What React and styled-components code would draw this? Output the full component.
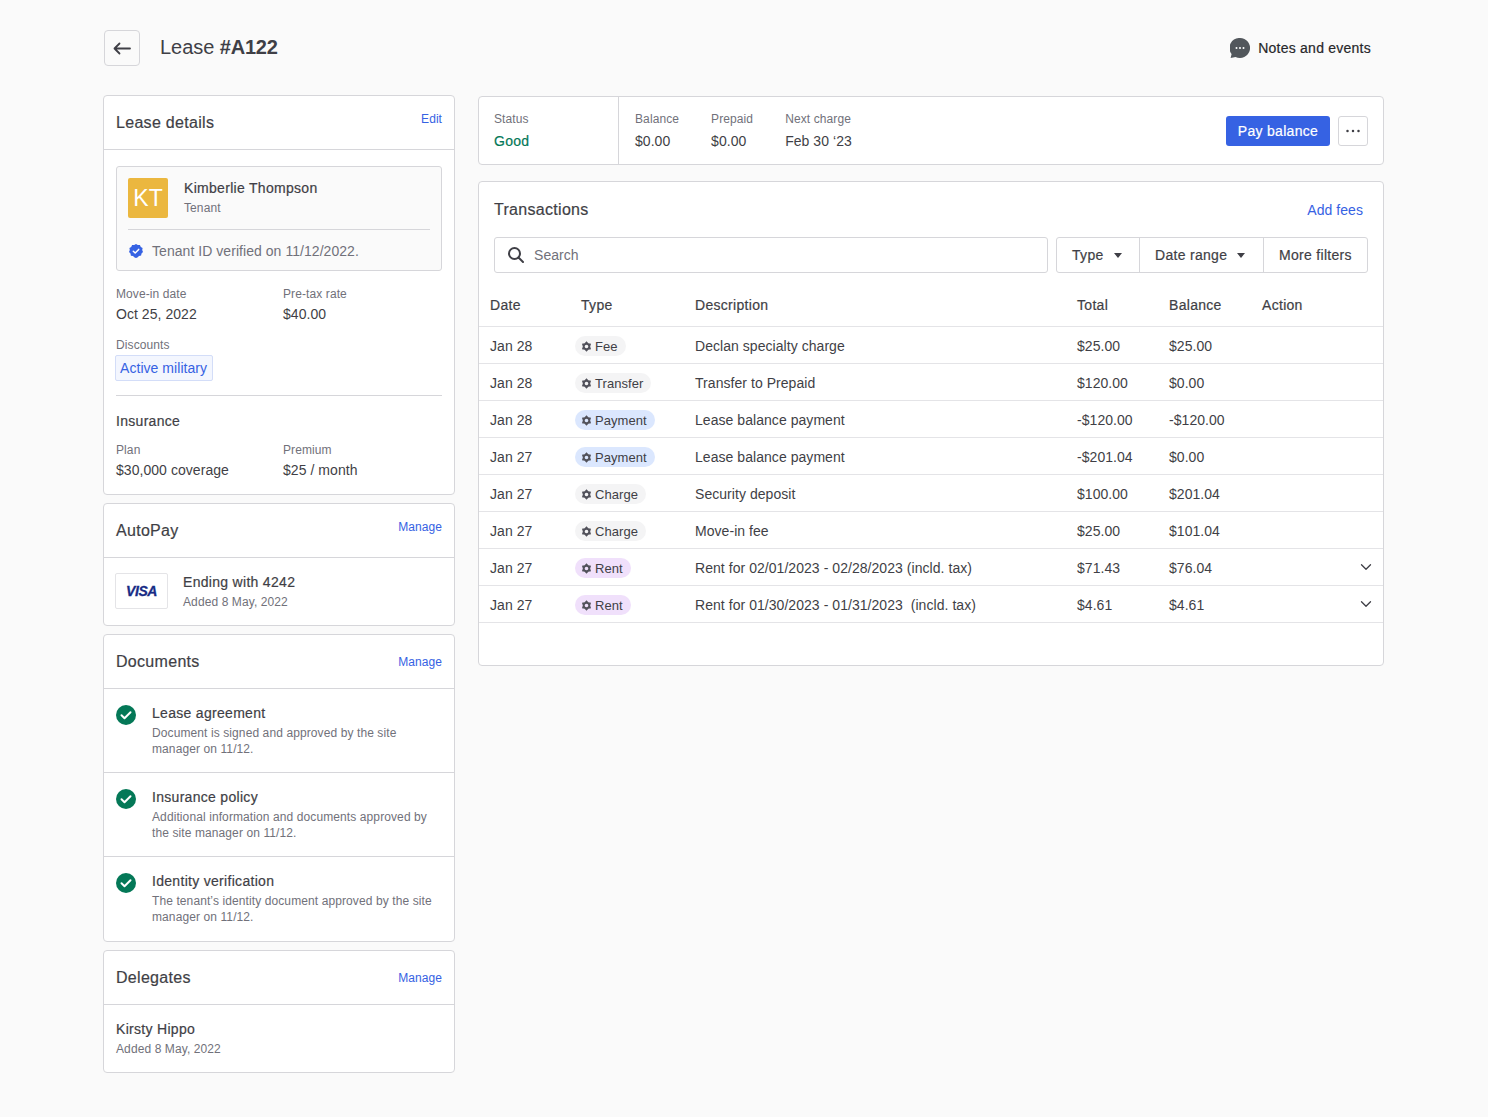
import React from 'react'
import styled, { createGlobalStyle, css } from 'styled-components'
import { ChevronDown } from 'lucide-react'

const colors = {
  bg: '#fafafa',
  border: '#d6d6da',
  line: '#e4e4e7',
  text: '#3f3f46',
  muted: '#71717a',
  blue: '#3662e3',
  green: '#047857',
}

const medium = css`
  font-weight: 400;
  letter-spacing: 0.3px;
  -webkit-text-stroke: 0.2px currentColor;
`

const GlobalStyle = createGlobalStyle`
  html, body { margin: 0; padding: 0; background: ${colors.bg}; }
  body {
    font-family: "Liberation Sans", Arial, sans-serif;
    color: ${colors.text};
    font-size: 14px;
    letter-spacing: 0.05px;
  }
  * { box-sizing: border-box; }
`

const Page = styled.div`
  width: 1488px;
  height: 1117px;
  padding: 30px 104px 0 103px;
`

const Header = styled.header`
  display: flex;
  align-items: center;
  height: 36px;
  margin-bottom: 29px;
  padding-left: 1px;
  padding-right: 13px;
`

const BackButton = styled.button`
  width: 36px;
  height: 36px;
  padding: 0;
  display: flex;
  align-items: center;
  justify-content: center;
  background: transparent;
  border: 1px solid ${colors.border};
  border-radius: 4px;
  color: ${colors.text};
`

const Title = styled.h1`
  margin: 0 0 2px 20px;
  font-size: 20px;
  line-height: 30px;
  font-weight: 400;
  letter-spacing: -0.05px;
  b { font-weight: 700; letter-spacing: -0.2px; }
`

const NotesLink = styled.div`
  margin-left: auto;
  display: flex;
  align-items: center;
  gap: 8px;
  font-size: 14px;
  ${medium}
  letter-spacing: 0.24px;
  color: #27272a;
`

const Columns = styled.div`
  display: flex;
  align-items: flex-start;
  gap: 23px;
`

const Sidebar = styled.aside`
  width: 352px;
  display: flex;
  flex-direction: column;
  gap: 8px;
`

const Main = styled.main`
  width: 906px;
  padding-top: 1px;
  display: flex;
  flex-direction: column;
  gap: 16px;
`

const Card = styled.section`
  background: #fff;
  border: 1px solid ${colors.border};
  border-radius: 4px;
`

const CardHeader = styled.div`
  height: 54px;
  padding: 0 12px;
  display: flex;
  align-items: center;
  justify-content: space-between;
  border-bottom: 1px solid ${colors.border};
`

const CardTitle = styled.h2`
  margin: 0;
  font-size: 16px;
  ${medium}
  color: ${colors.text};
`

const LinkText = styled.a`
  color: ${colors.blue};
  font-size: ${p => p.$size || 12}px;
  position: relative;
  top: ${p => p.$up ? -4 : 0}px;
`

const CardBody = styled.div`
  padding: ${p => p.$pad || '16px 12px'};
`

const TenantBox = styled.div`
  border: 1px solid ${colors.border};
  border-radius: 3px;
  background: #fafafa;
  padding: 11px 11px 0;
  height: 105px;
`

const TenantRow = styled.div`
  display: flex;
  align-items: center;
  gap: 16px;
  padding-bottom: 11px;
  border-bottom: 1px solid ${colors.border};
`

const TenantInfo = styled.div`
  padding-bottom: 2px;
`

const Avatar = styled.div`
  width: 40px;
  height: 40px;
  border-radius: 2px;
  background: #ebb73f;
  color: #fff;
  font-size: 23px;
  display: flex;
  align-items: center;
  justify-content: center;
`

const Name = styled.div`
  font-size: 14px;
  ${medium}
  line-height: 20px;
`

const Sub = styled.div`
  font-size: 12px;
  line-height: 16px;
  letter-spacing: 0.1px;
  color: ${colors.muted};
  margin-top: ${p => p.$top || 0}px;
`

const Verified = styled.div`
  display: flex;
  align-items: center;
  gap: 9px;
  height: 41px;
  padding-left: 1px;
  color: ${colors.muted};
  font-size: 14px;
`

const FieldGrid = styled.div`
  display: grid;
  grid-template-columns: 167px 1fr;
  margin-top: ${p => p.$top || 0}px;
`

const FieldLabel = styled.div`
  font-size: 12px;
  line-height: 16px;
  letter-spacing: 0.1px;
  color: ${colors.muted};
`

const FieldValue = styled.div`
  font-size: 14px;
  line-height: 20px;
  margin-top: 2px;
`

const DiscountTag = styled.span`
  display: inline-block;
  margin: 2px 0 0 -1px;
  height: 26px;
  line-height: 24px;
  padding: 0 5px 0 4px;
  color: ${colors.blue};
  background: #f3f6fe;
  border: 1px solid #d3ddf8;
  border-radius: 2px;
  font-size: 14px;
`

const Divider = styled.hr`
  border: 0;
  border-top: 1px solid ${colors.border};
  margin: 14px 0 15px;
`

const SectionTitle = styled.div`
  font-size: 14px;
  ${medium}
  line-height: 20px;
`

const PayRow = styled.div`
  display: flex;
  align-items: center;
  gap: 15px;
`

const VisaBox = styled.div`
  width: 53px;
  height: 36px;
  border: 1px solid ${colors.line};
  border-radius: 2px;
  display: flex;
  align-items: center;
  justify-content: center;
  color: #172b85;
  font-size: 14px;
  font-weight: 700;
  font-style: italic;
  letter-spacing: -0.4px;
  -webkit-text-stroke: 0.3px currentColor;
`

const DocRow = styled.div`
  display: flex;
  gap: 16px;
  height: ${p => p.$h || 84}px;
  padding: 14px 12px 0;
  border-bottom: ${p => p.$last ? 'none' : `1px solid ${colors.border}`};
`

const DocIcon = styled.svg`
  flex: none;
  margin-top: 2px;
`

const DocTitle = styled.div`
  font-size: 14px;
  ${medium}
  line-height: 20px;
`

const DocText = styled.div`
  font-size: 12px;
  line-height: 16px;
  letter-spacing: 0.1px;
  color: ${colors.muted};
  margin-top: 2px;
  max-width: 285px;
`

const SummaryCard = styled(Card)`
  height: 69px;
  display: flex;
  align-items: stretch;
`

const SummaryStatus = styled.div`
  width: 140px;
  padding: 14px 15px;
  border-right: 1px solid ${colors.border};
`

const SummaryItems = styled.div`
  display: flex;
  padding: 14px 16px;
  gap: 32px;
`

const SummaryValue = styled.div`
  font-size: 14px;
  line-height: 20px;
  margin-top: 4px;
  ${p => p.$good && medium}
  color: ${p => p.$good ? colors.green : colors.text};
`

const SummaryActions = styled.div`
  margin-left: auto;
  display: flex;
  align-items: center;
  gap: 8px;
  padding-right: 15px;
`

const PayButton = styled.button`
  height: 30px;
  width: 104px;
  padding: 0;
  background: ${colors.blue};
  color: #fff;
  border: 0;
  border-radius: 3px;
  font-family: inherit;
  font-size: 14px;
  ${medium}
`

const MoreButton = styled.button`
  width: 30px;
  height: 30px;
  padding: 0;
  display: flex;
  align-items: center;
  justify-content: center;
  background: #fff;
  border: 1px solid ${colors.border};
  border-radius: 3px;
`

const TxCard = styled(Card)`
  height: 485px;
`

const TxHeader = styled.div`
  display: flex;
  align-items: center;
  justify-content: space-between;
  padding: 0 20px 0 15px;
  height: 55px;
`

const Toolbar = styled.div`
  display: flex;
  gap: 8px;
  padding: 0 15px;
  margin-bottom: 12px;
`

const SearchBox = styled.div`
  flex: 1;
  height: 36px;
  display: flex;
  align-items: center;
  gap: 10px;
  padding: 0 13px;
  border: 1px solid ${colors.border};
  border-radius: 3px;
  color: ${colors.muted};
`

const FilterGroup = styled.div`
  display: flex;
  height: 36px;
  border: 1px solid ${colors.border};
  border-radius: 3px;
`

const FilterItem = styled.div`
  display: flex;
  align-items: center;
  gap: 10px;
  width: ${p => p.$w}px;
  padding-left: 15px;
  ${medium}
  border-left: ${p => p.$first ? 'none' : `1px solid ${colors.border}`};
`

const Caret = styled.span`
  width: 0;
  height: 0;
  border-left: 4.5px solid transparent;
  border-right: 4.5px solid transparent;
  border-top: 5px solid ${colors.text};
`

const TableRow = styled.div`
  display: grid;
  grid-template-columns: 91px 114px 382px 92px 93px 1fr 18px;
  align-items: center;
  height: ${p => p.$head ? 42 : 37}px;
  padding: ${p => p.$head ? '0 8px 2px 11px' : '1px 8px 0 11px'};
  border-bottom: 1px solid ${colors.line};
  ${p => p.$head && medium}
`

const pillBg = { gray: '#f4f4f5', blue: '#dbe7fe', purple: '#f0e0fb' }

const Pill = styled.span`
  justify-self: start;
  margin-left: -6px;
  height: 20px;
  padding: 1px 8px 0 6px;
  display: inline-flex;
  align-items: center;
  gap: 3px;
  border-radius: 10px;
  font-size: 13px;
  line-height: 19px;
  background: ${p => pillBg[p.$tone]};
`

const Chevron = styled(ChevronDown)`
  margin-top: -2px;
`

const Gear = () => (
  <svg width="11" height="11" viewBox="0 0 24 24" fill="#52525b">
    <path fillRule="evenodd" d="M12 .5L16 5.070 21.960 6.250 20 12l1.960 5.750L16 18.930 12 23.500l-4-4.570-5.960-1.180L4 12 2.040 6.250 8 5.070zM12 8a4 4 0 1 0 0 8 4 4 0 0 0 0-8z" />
  </svg>
)

const CheckCircle = () => (
  <DocIcon width="20" height="20" viewBox="0 0 20 20">
    <circle cx="10" cy="10" r="10" fill={colors.green} />
    <path d="M5.500 10.300l3 2.900 6-6" fill="none" stroke="#fff" strokeWidth="2" strokeLinecap="round" strokeLinejoin="round" />
  </DocIcon>
)

const transactions = [
  ['Jan 28', 'Fee', 'gray', 'Declan specialty charge', '$25.00', '$25.00'],
  ['Jan 28', 'Transfer', 'gray', 'Transfer to Prepaid', '$120.00', '$0.00'],
  ['Jan 28', 'Payment', 'blue', 'Lease balance payment', '-$120.00', '-$120.00'],
  ['Jan 27', 'Payment', 'blue', 'Lease balance payment', '-$201.04', '$0.00'],
  ['Jan 27', 'Charge', 'gray', 'Security deposit', '$100.00', '$201.04'],
  ['Jan 27', 'Charge', 'gray', 'Move-in fee', '$25.00', '$101.04'],
  ['Jan 27', 'Rent', 'purple', 'Rent for 02/01/2023 - 02/28/2023 (incld. tax)', '$71.43', '$76.04', true],
  ['Jan 27', 'Rent', 'purple', 'Rent for 01/30/2023 - 01/31/2023  (incld. tax)', '$4.61', '$4.61', true],
]

const documents = [
  ['Lease agreement', 'Document is signed and approved by the site manager on 11/12.'],
  ['Insurance policy', 'Additional information and documents approved by the site manager on 11/12.'],
  ['Identity verification', 'The tenant’s identity document approved by the site manager on 11/12.'],
]

const App = () => (
  <Page>
    <GlobalStyle />
    <Header>
      <BackButton>
        <svg width="18" height="13" viewBox="0 0 18 13" fill="none" stroke="currentColor" strokeWidth="1.800" strokeLinecap="round" strokeLinejoin="round">
          <path d="M17 6.500H1.500M6.500 1.500l-5 5 5 5" />
        </svg>
      </BackButton>
      <Title>Lease <b>#A122</b></Title>
      <NotesLink>
        <svg width="20" height="20" viewBox="0 0 20 20">
          <path d="M10 0a10 10 0 1 1-4.500 18.900L.6 20l1-3.900A10 10 0 0 1 10 0z" fill="#52575c" />
          <circle cx="6.500" cy="10" r="1" fill="#fff" />
          <circle cx="10" cy="10" r="1" fill="#fff" />
          <circle cx="13.500" cy="10" r="1" fill="#fff" />
        </svg>
        Notes and events
      </NotesLink>
    </Header>
    <Columns>
      <Sidebar>
        <Card>
          <CardHeader>
            <CardTitle>Lease details</CardTitle>
            <LinkText $up>Edit</LinkText>
          </CardHeader>
          <CardBody $pad="16px 12px 14px">
            <TenantBox>
              <TenantRow>
                <Avatar>KT</Avatar>
                <TenantInfo>
                  <Name>Kimberlie Thompson</Name>
                  <Sub $top={2}>Tenant</Sub>
                </TenantInfo>
              </TenantRow>
              <Verified>
                <svg width="14" height="14" viewBox="0 0 14 14">
                  <path d="M7 0l1.800 1.100 2.100-.1.900 1.900 1.800 1.100-.4 2.100.8 1.900-1.500 1.500-.4 2.100-2.100.3L8.400 13.500 7 14l-1.400-.5-1.600-1.500-2.100-.3-.4-2.100L0 8.100l.8-2L.4 4l1.800-1.100.9-1.900 2.100.1z" fill={colors.blue} />
                  <path d="M4.300 7.200l1.900 1.800 3.500-3.600" fill="none" stroke="#fff" strokeWidth="1.500" strokeLinecap="round" strokeLinejoin="round" />
                </svg>
                Tenant ID verified on 11/12/2022.
              </Verified>
            </TenantBox>
            <FieldGrid $top={15}>
              <div>
                <FieldLabel>Move-in date</FieldLabel>
                <FieldValue>Oct 25, 2022</FieldValue>
              </div>
              <div>
                <FieldLabel>Pre-tax rate</FieldLabel>
                <FieldValue>$40.00</FieldValue>
              </div>
            </FieldGrid>
            <FieldGrid $top={13}>
              <FieldLabel>Discounts</FieldLabel>
            </FieldGrid>
            <DiscountTag>Active military</DiscountTag>
            <Divider />
            <SectionTitle>Insurance</SectionTitle>
            <FieldGrid $top={11}>
              <div>
                <FieldLabel>Plan</FieldLabel>
                <FieldValue>$30,000 coverage</FieldValue>
              </div>
              <div>
                <FieldLabel>Premium</FieldLabel>
                <FieldValue>$25 / month</FieldValue>
              </div>
            </FieldGrid>
          </CardBody>
        </Card>
        <Card>
          <CardHeader>
            <CardTitle>AutoPay</CardTitle>
            <LinkText $up>Manage</LinkText>
          </CardHeader>
          <CardBody $pad="14px 11px 15px">
            <PayRow>
              <VisaBox>VISA</VisaBox>
              <div>
                <Name>Ending with 4242</Name>
                <Sub $top={2}>Added 8 May, 2022</Sub>
              </div>
            </PayRow>
          </CardBody>
        </Card>
        <Card>
          <CardHeader>
            <CardTitle>Documents</CardTitle>
            <LinkText>Manage</LinkText>
          </CardHeader>
          {documents.map(([title, text], i) => (
            <DocRow key={title} $last={i === 2}>
              <CheckCircle />
              <div>
                <DocTitle>{title}</DocTitle>
                <DocText>{text}</DocText>
              </div>
            </DocRow>
          ))}
        </Card>
        <Card>
          <CardHeader>
            <CardTitle>Delegates</CardTitle>
            <LinkText>Manage</LinkText>
          </CardHeader>
          <CardBody $pad="14px 12px 15px">
            <Name>Kirsty Hippo</Name>
            <Sub $top={2}>Added 8 May, 2022</Sub>
          </CardBody>
        </Card>
      </Sidebar>
      <Main>
        <SummaryCard>
          <SummaryStatus>
            <FieldLabel>Status</FieldLabel>
            <SummaryValue $good>Good</SummaryValue>
          </SummaryStatus>
          <SummaryItems>
            <div>
              <FieldLabel>Balance</FieldLabel>
              <SummaryValue>$0.00</SummaryValue>
            </div>
            <div>
              <FieldLabel>Prepaid</FieldLabel>
              <SummaryValue>$0.00</SummaryValue>
            </div>
            <div>
              <FieldLabel>Next charge</FieldLabel>
              <SummaryValue>Feb 30 ‘23</SummaryValue>
            </div>
          </SummaryItems>
          <SummaryActions>
            <PayButton>Pay balance</PayButton>
            <MoreButton>
              <svg width="16" height="4" viewBox="0 0 16 4" fill="#3f3f46">
                <circle cx="2.500" cy="2" r="1.250" />
                <circle cx="8" cy="2" r="1.250" />
                <circle cx="13.500" cy="2" r="1.250" />
              </svg>
            </MoreButton>
          </SummaryActions>
        </SummaryCard>
        <TxCard>
          <TxHeader>
            <CardTitle>Transactions</CardTitle>
            <LinkText $size={14}>Add fees</LinkText>
          </TxHeader>
          <Toolbar>
            <SearchBox>
              <svg width="16" height="16" viewBox="0 0 16 16" fill="none" stroke={colors.text} strokeWidth="2" strokeLinecap="round">
                <circle cx="6.500" cy="6.500" r="5.500" />
                <path d="M10.500 10.500l4.500 4.500" />
              </svg>
              Search
            </SearchBox>
            <FilterGroup>
              <FilterItem $first $w={82}>Type <Caret /></FilterItem>
              <FilterItem $w={124}>Date range <Caret /></FilterItem>
              <FilterItem $w={104}>More filters</FilterItem>
            </FilterGroup>
          </Toolbar>
          <TableRow $head>
            <span>Date</span>
            <span>Type</span>
            <span>Description</span>
            <span>Total</span>
            <span>Balance</span>
            <span>Action</span>
            <span />
          </TableRow>
          {transactions.map(([date, type, tone, desc, total, balance, expandable], i) => (
            <TableRow key={i}>
              <span>{date}</span>
              <Pill $tone={tone}><Gear />{type}</Pill>
              <span style={{ whiteSpace: 'pre' }}>{desc}</span>
              <span>{total}</span>
              <span>{balance}</span>
              <span />
              {expandable ? <Chevron size={18} color={colors.text} strokeWidth={1.75} /> : <span />}
            </TableRow>
          ))}
        </TxCard>
      </Main>
    </Columns>
  </Page>
)

export default App
